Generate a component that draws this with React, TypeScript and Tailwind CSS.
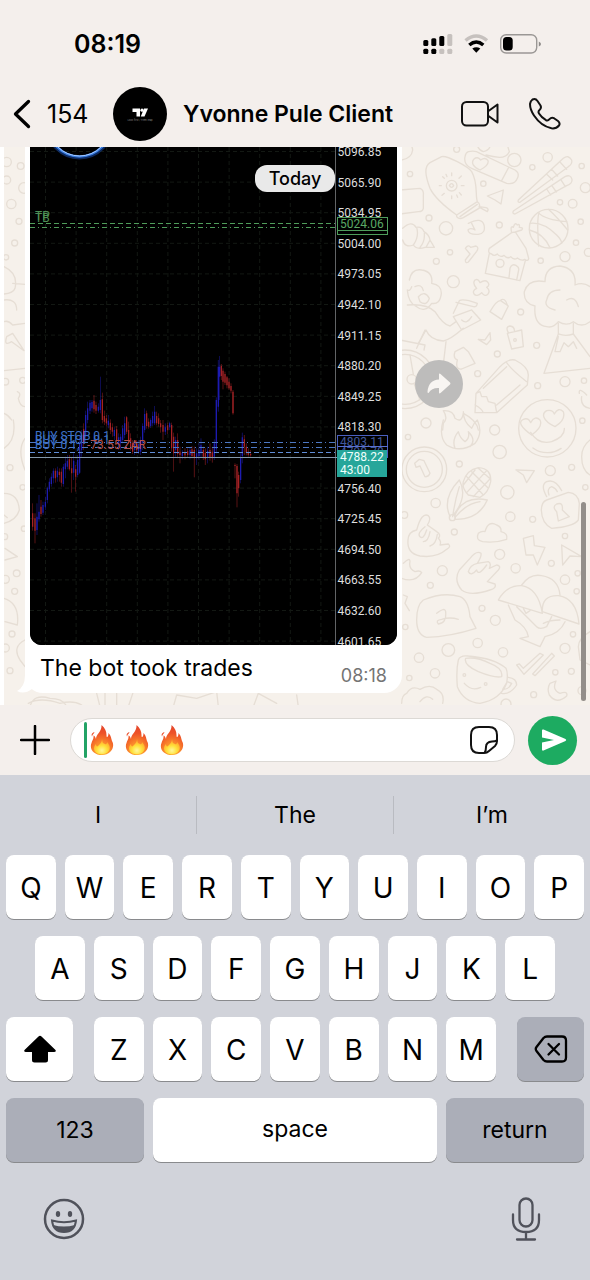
import React from "react";

const prices = [
  "5096.85", "5065.90", "5034.95", "5004.00", "4973.05", "4942.10", "4911.15", "4880.20", "4849.25",
  "4818.30", "", "4756.40", "4725.45", "4694.50", "4663.55", "4632.60", "4601.65",
];

type Candle = [number, number, number, number, number, "u" | "d"];

// x, high, body top, body bottom, low, direction
const candles: Candle[] = [
  [38, 490, 520, 560, 572, "d"], [45, 520, 535, 572, 610, "d"], [51, 490, 530, 570, 585, "u"], [57, 465, 515, 538, 545, "u"],
  [63, 480, 500, 522, 530, "d"], [69, 485, 495, 518, 525, "u"], [76, 470, 485, 500, 510, "u"], [82, 440, 445, 480, 490, "u"],
  [88, 415, 425, 448, 455, "u"], [94, 400, 410, 432, 440, "u"], [100, 385, 392, 415, 430, "u"], [106, 385, 392, 415, 428, "d"],
  [112, 380, 392, 412, 425, "u"], [118, 385, 395, 405, 425, "d"], [124, 385, 395, 428, 440, "d"], [130, 372, 380, 432, 440, "u"],
  [136, 350, 370, 388, 415, "u"], [142, 345, 362, 380, 388, "u"], [148, 345, 358, 388, 392, "d"], [155, 352, 385, 400, 458, "d"],
  [161, 340, 362, 398, 420, "u"], [167, 375, 388, 410, 455, "d"], [173, 345, 360, 405, 412, "u"], [179, 290, 310, 398, 402, "u"],
  [185, 270, 285, 330, 350, "u"], [191, 250, 268, 310, 330, "d"], [197, 212, 225, 290, 305, "u"], [203, 185, 205, 240, 250, "u"],
  [210, 180, 188, 212, 222, "u"], [216, 180, 186, 205, 215, "u"], [222, 165, 182, 208, 218, "d"], [228, 185, 195, 212, 222, "d"],
  [235, 190, 200, 212, 218, "u"], [241, 110, 180, 210, 220, "u"], [247, 158, 178, 240, 250, "d"], [253, 212, 228, 245, 255, "d"],
  [259, 225, 235, 250, 260, "d"], [265, 225, 242, 256, 265, "u"], [271, 238, 248, 270, 282, "d"], [277, 250, 262, 275, 290, "d"],
  [283, 262, 270, 288, 300, "u"], [290, 258, 268, 302, 312, "d"], [296, 280, 292, 322, 330, "u"], [302, 282, 290, 310, 330, "u"],
  [308, 255, 265, 300, 310, "u"], [314, 230, 250, 285, 295, "u"], [320, 228, 232, 275, 282, "d"], [326, 245, 270, 300, 312, "d"],
  [332, 280, 295, 325, 332, "d"], [338, 300, 308, 335, 342, "d"], [344, 300, 312, 330, 345, "u"], [350, 300, 308, 330, 340, "d"],
  [356, 300, 312, 335, 342, "u"], [362, 290, 300, 335, 345, "u"], [368, 250, 258, 308, 330, "u"], [374, 205, 222, 270, 278, "u"],
  [380, 212, 220, 258, 266, "d"], [386, 235, 245, 260, 266, "d"], [392, 235, 240, 258, 264, "u"], [398, 215, 228, 250, 258, "u"],
  [404, 198, 215, 250, 255, "u"], [410, 215, 228, 250, 256, "d"], [416, 220, 235, 252, 260, "d"], [422, 240, 250, 262, 278, "d"],
  [429, 240, 255, 275, 300, "d"], [436, 250, 262, 275, 285, "u"], [443, 248, 256, 270, 282, "d"], [449, 245, 250, 262, 270, "u"],
  [455, 248, 255, 325, 335, "d"], [461, 278, 290, 340, 395, "d"], [467, 290, 300, 330, 350, "u"], [473, 280, 300, 342, 355, "d"],
  [480, 320, 335, 345, 370, "d"], [487, 330, 338, 348, 358, "u"], [495, 325, 336, 346, 358, "d"], [503, 325, 334, 345, 352, "d"],
  [510, 322, 330, 345, 358, "u"], [516, 318, 328, 348, 355, "d"], [523, 320, 330, 355, 412, "d"], [530, 325, 340, 355, 375, "u"],
  [537, 310, 330, 348, 360, "u"], [543, 295, 315, 340, 352, "u"], [550, 320, 330, 350, 360, "d"], [556, 325, 338, 358, 375, "d"],
  [563, 320, 332, 352, 370, "u"], [570, 310, 330, 352, 362, "d"], [577, 320, 335, 355, 368, "d"], [583, 298, 310, 350, 360, "u"],
  [589, 172, 180, 328, 340, "u"], [595, 60, 80, 200, 215, "u"], [599, 48, 80, 110, 180, "u"], [604, 72, 78, 108, 120, "d"],
  [609, 85, 92, 125, 148, "d"], [615, 95, 102, 128, 135, "d"], [621, 108, 112, 136, 145, "d"], [627, 115, 125, 145, 150, "d"],
  [633, 130, 138, 152, 160, "d"], [639, 150, 155, 220, 224, "d"], [645, 370, 375, 378, 415, "d"], [651, 372, 378, 460, 502, "d"],
  [656, 395, 405, 445, 470, "d"], [662, 340, 352, 420, 430, "u"], [667, 278, 292, 348, 370, "u"], [673, 285, 298, 320, 345, "d"],
  [679, 310, 320, 338, 346, "d"], [685, 325, 335, 345, 350, "d"], [692, 330, 342, 346, 350, "d"],
];

function Chart() {
  return (
    <svg viewBox="30 147 367 498" className="block w-full rounded-b-xl bg-black" role="img" aria-label="Price chart" fontFamily="Roboto, sans-serif" fontSize="12">
      <rect x="30" y="147" width="367" height="498" fill="#000" />
      <g stroke="#131813" strokeWidth="1" strokeDasharray="4 3">
        {prices.map((_, i) => (
          <line key={i} x1="30" x2="335" y1={151.5 + i * 30.6} y2={151.5 + i * 30.6} />
        ))}
        {Array.from({ length: 10 }, (_, i) => (
          <line key={i} y1="147" y2="645" x1={45.5 + i * 30.6} x2={45.5 + i * 30.6} />
        ))}
      </g>
      <circle cx="79.500" cy="125.500" r="32" fill="none" stroke="#123b86" strokeWidth="4" opacity=".7" />
      <circle cx="79.500" cy="125.500" r="31" fill="none" stroke="#3478dd" strokeWidth="2.500" />
      <circle cx="79.500" cy="125.500" r="30.500" fill="none" stroke="#a8cbff" strokeWidth="1" />
      <g transform="translate(20 340) scale(.33333)">
        {candles.map(([x, high, top, bottom, low, dir]) => (
          <g key={x} stroke={dir === "u" ? "#211fc0" : "#b4262a"}>
            <path d={`M${x} ${high}V${low}`} strokeWidth="2" opacity=".75" />
            <path d={`M${x} ${top}V${bottom}`} strokeWidth="3.800" opacity=".9" />
          </g>
        ))}
      </g>
      <path d="M335.500 147V645" stroke="#626466" />
      <g stroke="#4f9c5a">
        <path d="M30 223.500H335" strokeDasharray="5 3" />
        <path d="M30 227.500H335" strokeDasharray="5 3 1 3" />
      </g>
      <g fill="#4d8f55">
        <text x="35" y="220">TP</text>
        <text x="35" y="222">TB</text>
      </g>
      <g stroke="#4d78c4">
        <path d="M30 442.500H335M30 447.500H335" strokeDasharray="6 3 1 3" />
        <path d="M30 452.500H335" strokeDasharray="5 3" stroke="#5f8dd8" />
      </g>
      <path d="M30 457.500H337" stroke="#8398ac" />
      <g fill="#3d70c6">
        <text x="35" y="440">BUY STOP 0.1</text>
        <text x="35" y="444">BUY STOP 0.1</text>
        <text x="35" y="449">BUY 0.1,</text>
      </g>
      <text x="87" y="449" fill="#b5504a">-73.55 ZAR</text>
      <g fill="#dedede">
        {prices.map((p, i) => (
          <text key={i} x="337.500" y={156 + i * 30.6}>{p}</text>
        ))}
      </g>
      <g fill="#000" stroke="#4f9e5c">
        <rect x="337.500" y="217.500" width="50" height="17" />
        <path d="M338 230.500H388" />
      </g>
      <text x="340" y="228" fill="#5aa864">5024.06</text>
      <rect x="337.500" y="435.500" width="50" height="22" fill="#000" stroke="#4a5fc0" />
      <g fill="#40589c">
        <text x="340" y="446">4803.11</text>
        <text x="340" y="456">4798.78</text>
      </g>
      <path d="M338 446.500H388" stroke="#5a6fd0" />
      <rect x="337" y="450" width="50" height="27" fill="#26a69a" />
      <g fill="#effffc">
        <text x="340" y="461">4788.22</text>
        <text x="340" y="474">43:00</text>
      </g>
    </svg>
  );
}

const upperDots = [
  [30, 102, 8], [170, 28, 9], [343, 60, 20], [443, 52, 14], [397, 82, 8], [250, 131, 8], [545, 78, 8], [556, 143, 15],
  [480, 187, 8], [518, 191, 13], [542, 245, 8], [87, 234, 9], [138, 265, 20], [298, 255, 9], [150, 337, 8], [109, 364, 9],
  [528, 308, 8], [495, 350, 15], [422, 362, 8], [160, 425, 18], [362, 516, 9], [410, 616, 9], [292, 642, 9], [233, 701, 9],
  [413, 737, 9], [495, 725, 15], [552, 722, 8], [78, 849, 15], [547, 842, 8], [284, 870, 15], [565, 337, 12],
];
const lowerDots = [
  [24, 51, 8], [178, 132, 9], [299, 96, 20], [451, 152, 15], [515, 142, 9], [322, 217, 20], [107, 249, 14], [331, 290, 14],
  [398, 298, 9], [163, 336, 9], [495, 348, 8], [299, 403, 15], [347, 445, 14], [127, 452, 15], [91, 496, 9], [454, 430, 9],
  [495, 479, 14], [533, 460, 8], [246, 565, 9], [286, 601, 15], [16, 621, 8], [233, 669, 14], [309, 697, 14], [57, 713, 14],
  [145, 690, 19], [105, 760, 14], [28, 774, 8], [466, 757, 8], [514, 754, 9], [495, 685, 15], [519, 643, 8], [401, 824, 9],
  [530, 514, 8], [318, 852, 15], [546, 812, 12], [556, 202, 8], [13, 285, 10],
];
const leftDots = [
  [62, 78, 10], [34, 192, 14], [57, 244, 9], [44, 309, 9], [18, 352, 8], [16, 725, 10], [68, 721, 9], [20, 66, 14], [72, 144, 16], [20, 120, 12],
  [30, 983, 9], [68, 1042, 8], [50, 1300, 10], [44, 1354, 9], [16, 1318, 12], [36, 1482, 9], [16, 1524, 12], [30, 1592, 9], [14, 1190, 9], [72, 1166, 8],
];

function Dots({ list }: { list: number[][] }) {
  return <>{list.map(([x, y, r], i) => <circle key={i} cx={x} cy={y} r={r} />)}</>;
}

function Wallpaper() {
  return (
    <svg viewBox="0 147 590 558" preserveAspectRatio="xMinYMin slice" className="absolute inset-0 h-full w-full" aria-hidden="true" fill="none" stroke="#e6ded5" strokeLinecap="round" strokeLinejoin="round" strokeWidth="4">
      <g transform="translate(400 140) scale(.33333)">
        <Dots list={upperDots} />
        <path d="M90 145C75 105 72 80 90 68L125 50C140 45 205 80 215 95C235 130 225 165 232 185L170 225C135 200 105 175 90 145ZM170 225C168 235 180 238 190 233L237 205C242 195 236 188 232 185M180 230 232 193M190 233 240 203 262 215C266 210 265 205 258 203L237 200" />
        <circle cx="155" cy="137" r="16" /><path d="M148 137q7-12 13 0q-6 10-13 0M155 107v-8M155 176v-8M124 137h-6M192 137h-8M133 115l-5-5M178 158l6 7M177 115l7-7M133 160l-7 6M141 110l-3-7M170 165l3 7" />
        <path d="M205 35Q225 30 240 40L345 90Q360 100 352 115Q345 135 320 130L215 85Q190 75 195 50Q197 38 205 35ZM240 90C220 82 212 68 222 57Q232 48 242 60Q256 50 264 62Q268 76 240 90ZM325 84 305 122M258 45Q280 50 298 52Q320 52 328 35L322 15M232 15Q235 30 250 35Q265 32 270 20" />
        <path d="M355 180 490 55Q505 43 515 60Q518 72 505 80L360 187Q352 188 355 180ZM340 213 495 110Q512 102 516 118Q518 130 500 137L345 222Q336 222 340 213ZM480 66l20 22M455 88l18 20M440 103l18 17M482 118l14 22M455 136l14 20M440 147l12 18" />
        <path d="M262 168 310 150 303 192 285 180ZM0 150 60 145Q72 150 70 165V205Q68 215 55 215L0 222M205 250Q245 230 252 255Q258 280 235 283Q205 285 204 270Q210 262 225 270L215 250M196 325Q205 312 212 322L228 318Q238 322 230 334L205 366Q196 372 196 360L210 342Z" />
        <path d="M335 278 268 325Q262 340 275 342Q282 350 292 342Q300 354 312 346Q322 358 332 350Q342 362 352 354Q365 364 374 358Q385 365 386 355L378 325 346 276 335 278Q330 255 340 262Q345 245 352 255Q360 250 358 262Q372 262 365 270L346 276M268 340 256 400 360 422 376 362M327 413 330 385Q335 370 348 376Q358 382 356 390L350 420" />
        <circle cx="300" cy="370" r="12" /><circle cx="446" cy="266" r="58" /><path d="M415 218Q435 240 500 245M390 250Q430 245 470 285Q485 300 485 310M388 270Q430 280 450 323M417 218Q410 240 416 318M445 208Q470 230 503 270" />
        <path d="M225 420Q235 415 240 428Q255 418 262 425Q272 435 260 442Q272 452 264 462Q255 472 245 458Q230 472 222 462Q216 452 230 445Q216 430 225 420ZM8 265Q35 240 48 262Q65 258 72 275Q88 285 90 300L103 322 75 322Q50 330 40 315Q15 325 8 300M50 262Q58 290 40 315M73 280Q75 305 60 322M90 300 78 322" />
        <path d="M28 420Q35 385 65 390Q100 395 95 430Q125 435 124 460Q120 495 95 490Q75 520 50 500Q25 490 22 450Q30 455 35 440M55 470Q75 450 88 475Q80 500 60 485ZM45 440q20-10 25 12M22 495Q80 490 105 515Q130 555 150 558L168 545M160 520 178 482Q190 475 232 490Q230 502 220 500L168 487M160 530 215 510 242 540 185 570ZM185 540q15 15 30-10M190 565Q150 600 130 603Q90 600 78 570L55 610" />
        <path d="M302 482Q290 480 270 515L305 538 325 498ZM300 482Q315 470 322 495M322 580 365 570 370 620 335 627ZM325 578Q315 560 330 558Q345 560 343 575M235 598 255 600 270 578 272 600 260 614ZM165 635 190 622 205 635 225 670 185 687Q165 690 172 660Q158 655 165 635" /><circle cx="345" cy="600" r="4" />
        <path d="M405 498Q370 490 373 455Q385 415 435 425Q435 380 480 378Q530 385 525 435Q550 425 570 440M405 498Q400 555 440 560Q460 565 475 545Q500 560 520 545Q545 565 570 545M440 480Q445 450 480 450M500 480Q525 465 535 500M440 480Q430 500 465 510M475 550V582L432 700 570 685M520 550V582L570 650M475 582Q497 590 520 582M475 590 465 635 480 635 492 608 505 620 520 605 530 625" />
        <circle cx="15" cy="718" r="88" /><circle cx="15" cy="718" r="75" /><circle cx="35" cy="718" r="14" /><path d="M0 600 75 615 72 630M30 645 40 703M42 730 60 780M75 570 50 625M138 605 128 690" />
        <path d="M225 818 228 760 300 680Q325 655 345 660Q385 680 385 705L382 735 290 818ZM228 760 240 755 245 770 260 770 265 785 285 790 290 818M320 668Q335 690 380 725M250 745 320 680M290 795 360 735M225 795q20 10 25 23" />
        <path d="M130 812Q160 810 165 835Q185 850 190 820Q230 840 235 870M130 812Q145 835 130 850L128 870" />
        <circle cx="442" cy="865" r="86" /><circle cx="442" cy="865" r="73" fill="none" strokeDasharray="90 400" strokeDashoffset="-70" />
        <path d="M465 860C425 840 425 820 440 812Q458 808 463 822Q475 800 490 815Q498 840 465 860ZM395 885C360 860 355 845 370 838Q385 832 392 848Q405 825 420 840Q430 860 395 885M538 760Q535 740 560 765M545 770Q540 800 570 805M0 15Q35 0 38 30Q35 55 5 60" />
      </g>
      <g transform="translate(400 420) scale(.33333)">
        <Dots list={lowerDots} />
        <path d="M130 0Q115 50 140 75Q180 100 225 70Q250 40 232 0Q220 10 215 25Q190 5 190 -25M165 85Q155 60 175 35Q180 55 195 65Q210 55 205 35Q230 60 210 80M392 37Q415 75 455 65Q495 50 493 25" />
        <circle cx="73" cy="148" r="67" /><circle cx="73" cy="148" r="54" /><path d="M44 130 58 118 72 122 90 160Q85 172 75 170L60 138 48 142Z" />
        <path d="M190 185Q200 150 235 143Q275 145 272 185Q265 220 240 232L205 225Q185 205 190 185ZM200 170 250 225M215 155 265 205M235 145 272 178M190 195 225 150M200 218 260 152M220 230 272 175M150 290Q125 235 178 180Q205 230 160 285M165 285Q190 225 262 240Q235 300 165 298ZM158 290Q165 240 178 200M165 292Q200 250 240 245" />
        <circle cx="157" cy="293" r="9" /><path d="M348 150 403 152 380 188 370 165ZM440 230Q420 195 440 185Q465 175 485 212M447 225Q440 205 455 200Q468 205 472 215M440 240 505 217Q535 220 538 250L535 300Q520 320 455 325Q425 310 424 270Q425 245 440 240ZM470 275Q455 260 470 252Q490 245 487 270L508 290 475 303Z" />
        <path d="M50 330Q65 275 85 287Q95 295 82 315L110 335Q125 345 115 355Q125 365 120 375L145 372Q155 380 140 388Q110 415 60 408Q20 400 24 360Q25 335 50 330ZM75 320Q50 340 60 350M60 350q10 10 20-20M70 365q15 0 20-30M90 378q18-5 22-35M248 365Q225 360 235 340Q245 332 255 335Q265 300 290 315Q305 320 303 335Q325 340 320 358Q285 370 248 365Z" />
        <path d="M210 415Q230 390 243 400Q245 410 232 430L265 425Q275 430 268 445L290 435Q305 438 295 450L262 485 285 492Q290 505 270 510Q210 530 185 510Q160 480 178 450ZM205 455Q210 435 232 430M205 455q8 15 25-5q5 20 30-15M370 355 400 347 403 377 435 382 412 435 400 405 378 405ZM485 375 545 410 510 408 488 435ZM10 430Q30 410 30 425Q25 445 45 455Q60 450 65 458Q45 490 5 475M10 525 22 530 15 550 28 572" />
        <path d="M70 540Q130 515 180 530Q205 540 210 590L228 625Q150 650 80 652Q50 645 50 600Q50 555 70 540ZM110 580Q135 560 137 575Q140 610 115 612Q105 600 125 598Q150 590 175 598" />
        <path d="M295 540Q320 495 365 497Q415 505 427 580ZM365 495Q390 460 425 467Q475 475 480 525M427 575Q425 525 475 527Q530 535 537 612ZM325 555 345 600Q380 620 385 650L360 655 420 680 435 650Q480 640 495 605M350 560 410 620Q420 630 440 620L455 590M370 565 378 580 390 572M430 610Q450 600 480 600" />
        <path d="M175 720Q180 705 205 708Q285 715 318 745Q325 760 320 790Q300 840 240 850Q190 845 172 800Q168 750 175 720ZM197 715Q190 735 235 755Q285 775 305 770Q310 745 270 730Q230 710 197 715ZM325 772Q350 775 350 795Q330 825 305 820M322 785 335 790Q325 810 308 808ZM193 790Q215 815 242 802" /><circle cx="193" cy="765" r="4" /><circle cx="257" cy="792" r="4" />
        <path d="M350 735 358 732 370 745 420 700 430 705 372 763ZM398 762 455 700 463 708 405 767ZM450 790 468 783Q455 810 480 820 505 812 500 828Q470 855 448 825Q440 805 450 790ZM20 820Q35 795 60 808Q90 790 110 808Q135 820 128 850M20 820Q5 825 5 850M60 845Q80 820 98 838M570 635Q535 655 535 680L540 720 570 735M570 60Q545 80 545 110Q545 150 570 165" />
      </g>
      <g transform="translate(0 140) scale(.33333)">
        <Dots list={leftDots} />
        <path d="M12 380Q55 400 45 445Q40 460 12 462M12 545Q25 540 38 555L75 550M12 480Q50 475 50 510M38 430 75 433M20 590Q10 620 35 605L72 632 38 580ZM12 692 75 685M52 755Q65 760 55 775Q60 800 75 800M12 820Q25 825 35 840M40 840Q50 900 12 925M75 895Q50 930 75 990M12 1060Q55 1060 58 1110Q50 1140 12 1150M15 1225 52 1250 15 1260M12 1375Q60 1390 52 1455L15 1445M75 1500Q35 1520 60 1560L75 1580M12 1125l10 8" />
        <path d="M85 1690Q120 1670 180 1690Q220 1680 245 1695M90 1700Q100 1660 150 1675Q190 1675 200 1700M290 1660 300 1700M315 1655V1700M350 1660V1700M400 1655 385 1700M520 1700 530 1665 590 1675 650 1655 655 1700M760 1700 775 1660 830 1690M890 1665 895 1700" />
      </g>
    </svg>
  );
}

function Flame() {
  return (
    <svg viewBox="0 0 24 30" className="h-[30px] w-6" role="img" aria-label="fire">
      <defs>
        <radialGradient id="outer" cx=".5" cy=".95" r=".9">
          <stop offset="0" stopColor="#ffb52b" /><stop offset=".4" stopColor="#fb8a2c" /><stop offset=".75" stopColor="#ee5328" /><stop offset="1" stopColor="#e4472b" />
        </radialGradient>
        <radialGradient id="inner" cx=".5" cy=".75" r=".7">
          <stop offset="0" stopColor="#fff79c" /><stop offset=".45" stopColor="#ffe13b" /><stop offset="1" stopColor="#ff9c2a" />
        </radialGradient>
      </defs>
      <path fill="url(#outer)" d="M11.500 0C15 3 16.500 6 16.500 10C16.500 11 16.500 12 17 12C18 12 18.500 10 18.500 8C21.500 11 21 14 22.500 17C25 23 20 30 12 30C4 30-1 24 1.500 18C2 16 4 14 3.500 10.500C5 11 5.500 13 6 14C6 9 12 7 11.500 0ZM4.500 7C4 9 2.500 9 2 11.500C1 9 2 8 4.500 7Z" />
      <path fill="url(#inner)" d="M12 14C13 17 12 18 15 19C16.500 20 17 18 17 17C20 20 21 24 18 27C15 30 8 30 5.500 27C3 24 4 21 6 19C6 21 7 22 8 21C10 19 12 17 12 14Z" />
    </svg>
  );
}

const keyBase = "flex h-16 items-center justify-center rounded-lg text-black shadow-[0_1px_0_#898a8d] min-w-0";

function Key({ label }: { label: string }) {
  return <button className={`${keyBase} flex-1 bg-white pt-[2px] text-[28px] leading-8`}>{label}</button>;
}

export default function App() {
  return (
    <div className="flex min-h-screen flex-col bg-[#d1d3da] font-[Inter,sans-serif] text-black">
      <header className="bg-[#f4efec]">
        <div className="flex h-[88px] items-center justify-between pl-[74px] pr-[49px]">
          <time className="text-[25px] font-semibold leading-8">08:19</time>
          <svg viewBox="423 33 118 22" className="h-[22px] w-[118px]" role="img" aria-label="Signal, Wi-Fi and battery">
            <rect x="423.300" y="40" width="5" height="6" rx="1.500" /><rect x="431.300" y="38.300" width="5" height="7.700" rx="1.500" />
            <rect x="439.300" y="36" width="5" height="10" rx="1.500" /><rect x="447.300" y="34" width="5" height="12" rx="1.500" fill="#c6c1be" />
            <rect x="423.300" y="48.700" width="5" height="5.300" rx="1.500" /><rect x="431.300" y="48.700" width="5" height="5.300" rx="1.500" />
            <rect x="439.300" y="48.700" width="5" height="5.300" rx="1.500" fill="#c6c1be" /><rect x="447.300" y="48.700" width="5" height="5.300" rx="1.500" fill="#c6c1be" />
            <path d="M465.500 40.500Q476.300 31.500 487 40.500" fill="none" stroke="#c6c1be" strokeWidth="3.500" />
            <path d="M469.300 45Q476.300 39 483.300 45" fill="none" stroke="#000" strokeWidth="3.500" />
            <path d="M472.300 48.500Q476.300 45.800 480.300 48.500L476.300 52.800Z" />
            <rect x="500.700" y="34.700" width="36" height="18.300" rx="5.500" fill="none" stroke="#9a9795" strokeWidth="1.400" />
            <rect x="503" y="37" width="9.700" height="13.500" rx="3.500" /><path d="M538.800 41.500Q541 42.500 541 44Q541 45.500 538.800 46.500Z" fill="#8e8b89" />
          </svg>
        </div>
        <div className="flex h-[59px] items-center pb-2 pl-3 pr-[29px]">
          <button className="flex items-center gap-4 text-[25px] leading-8" aria-label="Back, 154 unread">
            <svg viewBox="0 0 19 30" className="h-[30px] w-[19px]" fill="none" stroke="#000" strokeWidth="3.300" strokeLinecap="round" strokeLinejoin="round"><path d="M16.500 2.500 3.500 15 16.500 27.500" /></svg>
            <span className="w-[50px] text-left">154</span>
          </button>
          <svg viewBox="0 0 54 54" className="ml-4 size-[54px] shrink-0" role="img" aria-label="Profile photo">
            <circle cx="27" cy="27" r="27" />
            <path fill="#fff" d="M19.500 21.500H27V29.500H23.500V25H19.500ZM31 21.500H35L31.500 29.500H27.800Z" /><circle cx="29" cy="23.200" r="1.600" fill="#fff" />
            <text x="27" y="34" fill="#888" fontSize="2.500" textAnchor="middle">Look first / Then leap</text>
          </svg>
          <h1 className="ml-4 flex-1 whitespace-nowrap text-[23px] font-semibold leading-8">Yvonne Pule Client</h1>
          <button aria-label="Video call">
            <svg viewBox="460 100 40 27" className="h-[27px] w-10" fill="none" stroke="#111" strokeWidth="2" strokeLinejoin="round"><rect x="462" y="102" width="26" height="23.500" rx="4.500" /><path d="M488.500 111 497.500 104.500V122.500L488.500 116" /></svg>
          </button>
          <button aria-label="Call" className="ml-7">
            <svg viewBox="528 97 33 34" className="h-[34px] w-[33px]" fill="none" stroke="#111" strokeWidth="2" strokeLinejoin="round"><path d="M532.500 99.500Q535.500 98 537.500 101L540.500 105.500Q541.800 108 539.500 110Q537.800 111.500 539 113.500Q541.500 117.500 546 120.200Q548 121 549.500 119.200Q551.500 117 554 118.200L558 121Q560.500 123 559 125.500Q556 129 551.500 128.300Q541 126 534 115.500Q530 109.500 530 104Q530.500 101 532.500 99.500Z" /></svg>
          </button>
        </div>
      </header>

      <main className="relative overflow-hidden bg-[#f6f1eb]">
        <Wallpaper />
        <div className="relative flex items-start border-l-4 border-white pb-3 pl-[21px]">
          <article className="relative w-[377px] rounded-b-[18px] bg-white px-[5px]">
            <svg viewBox="0 0 18 18" className="absolute -left-2 bottom-0 size-[18px]" aria-hidden="true"><path d="M8 0Q8 12 0 16Q7 20 15 14L18 6Z" fill="#fff" /></svg>
            <Chart />
            <div className="relative flex h-12 items-start justify-between px-[10px] pt-[7px]">
              <p className="text-[23px] leading-8">The bot took trades</p>
              <time className="pt-3 text-[18px] leading-6 text-[#747474]">08:18</time>
            </div>
          </article>
          <button aria-label="Forward" className="ml-[13px] mt-[213px] flex size-12 items-center justify-center rounded-full bg-[#bdbcbb]">
            <svg viewBox="0 0 24 22" className="h-[22px] w-6" fill="#f8f5f2"><path d="M12 1.500Q12 0 13.500 1L23 9.500Q24 10.500 23 11.500L13.500 20Q12 21 12 19.500V15Q5 14.500 1.500 20Q.5 20.500.5 18.500Q1.500 7 12 6.500Z" /></svg>
          </button>
        </div>
        <div className="absolute inset-x-0 top-[18px] flex justify-center">
          <span className="rounded-xl bg-[#e9e9e9] px-[14px] text-[18px] font-medium leading-[27px]">Today</span>
        </div>
        <div className="absolute bottom-1 right-1 h-[199px] w-[5px] rounded-full bg-[#938e8a]" />
      </main>

      <form className="flex h-[70px] items-center bg-[#f4efec] pl-5 pr-[13px]">
        <button type="button" aria-label="Attach" className="shrink-0">
          <svg viewBox="0 0 30 30" className="size-[30px]" stroke="#000" strokeWidth="2.500" strokeLinecap="round"><path d="M15 1V29M1 15H29" /></svg>
        </button>
        <div className="ml-5 flex h-11 min-w-0 flex-1 items-center rounded-full border border-[#dcd9d5] bg-white pl-[13px] pr-4">
          <span className="h-9 w-[3px] shrink-0 rounded-full bg-[#22a366]" />
          <span className="ml-[3px] flex shrink-0 gap-[11px]"><Flame /><Flame /><Flame /></span>
          <input aria-label="Message" className="w-0 min-w-0 flex-1 bg-transparent text-[23px] outline-none" />
          <button type="button" aria-label="Stickers" className="shrink-0">
            <svg viewBox="0 0 28 28" className="size-7" fill="none" stroke="#111" strokeWidth="2" strokeLinejoin="round"><path d="M9 1H19Q27 1 27 9V15Q27 18 25 20L19 25Q17 27 14 27H9Q1 27 1 19V9Q1 1 9 1Z" /><path d="M27 14.500Q25 15.500 22 15.500Q16 16 16 21Q16 25 14.500 27" /></svg>
          </button>
        </div>
        <button type="button" aria-label="Send" className="ml-[13px] flex size-[49px] shrink-0 items-center justify-center rounded-full bg-[#1dab61]">
          <svg viewBox="0 0 26 22" className="ml-[3px] h-[22px] w-[26px]" fill="#fff"><path d="M1 1.500Q1 0 2.500.6L24.500 10Q26 11 24.500 12L2.500 21.500Q1 22 1 20.500V13.500L13 11 1 8.500Z" /></svg>
        </button>
      </form>

      <section aria-label="Keyboard" className="flex flex-1 flex-col bg-[#d1d3da] px-[6px]">
        <div className="-mx-[6px] flex h-20 items-center divide-x divide-[#b9bbc1] text-[23px]">
          {["I", "The", "I’m"].map((w) => (
            <button key={w} className="h-[38px] flex-1 leading-8">{w}</button>
          ))}
        </div>
        <div className="flex flex-col gap-[17px]">
          <div className="flex gap-[9px]">{[..."QWERTYUIOP"].map((k) => <Key key={k} label={k} />)}</div>
          <div className="flex gap-[9px] px-[29px]">{[..."ASDFGHJKL"].map((k) => <Key key={k} label={k} />)}</div>
          <div className="flex gap-[21px]">
            <button aria-label="Shift" className={`${keyBase} w-[67px] bg-white`}>
              <svg viewBox="0 0 32 28" className="h-7 w-8"><path d="M14.500 1.500Q16 0 17.500 1.500L31.500 15Q32.500 17 30 17H24V25Q24 27.500 21.500 27.500H10.500Q8 27.500 8 25V17H2Q-.5 17 .5 15Z" /></svg>
            </button>
            <div className="flex flex-1 gap-[9px]">{[..."ZXCVBNM"].map((k) => <Key key={k} label={k} />)}</div>
            <button aria-label="Delete" className={`${keyBase} w-[67px] bg-[#abaeb8]`}>
              <svg viewBox="0 0 34 28" className="h-7 w-[34px]" fill="none" stroke="#000" strokeWidth="2.300" strokeLinecap="round" strokeLinejoin="round"><path d="M13 1.500H28Q32 1.500 32 5.500V22.500Q32 26.500 28 26.500H13Q11 26.500 9.500 25L2.500 16Q1 14 2.500 12L9.500 3Q11 1.500 13 1.500Z" /><path d="M14.500 9 25 19.500M25 9 14.500 19.500" /></svg>
            </button>
          </div>
          <div className="flex gap-[9px]">
            <button className={`${keyBase} w-[138px] bg-[#abaeb8] text-[23px]`}>123</button>
            <button className={`${keyBase} flex-1 bg-white pb-[2px] text-[23px]`}>space</button>
            <button className={`${keyBase} w-[138px] bg-[#abaeb8] text-[23px]`}>return</button>
          </div>
        </div>
        <div className="flex items-center justify-between px-[37px] pb-8 pt-[35px]">
          <button aria-label="Emoji">
            <svg viewBox="0 0 42 42" className="size-[42px]" fill="none" stroke="#50525b" strokeWidth="2.500"><circle cx="21" cy="21" r="19" /><ellipse cx="15" cy="16" rx="2.200" ry="3" fill="#50525b" stroke="none" /><ellipse cx="27" cy="16" rx="2.200" ry="3" fill="#50525b" stroke="none" /><path d="M9 22.500Q21 26 33 22.500Q32 34 21 34Q10 34 9 22.500Z" strokeWidth="2" /><path d="M10 27Q21 30 32 27Q29 34 21 34Q13 34 10 27Z" fill="#50525b" stroke="none" /></svg>
          </button>
          <button aria-label="Dictate">
            <svg viewBox="0 0 42 44" className="h-11 w-[42px]" fill="none" stroke="#50525b" strokeWidth="2.300" strokeLinecap="round"><rect x="14.500" y="1.500" width="13" height="28" rx="6.500" /><path d="M8 17.500V23Q8 35 21 35Q34 35 34 23V17.500M21 35V42.500M12 42.500H30" /></svg>
          </button>
        </div>
      </section>
    </div>
  );
}
